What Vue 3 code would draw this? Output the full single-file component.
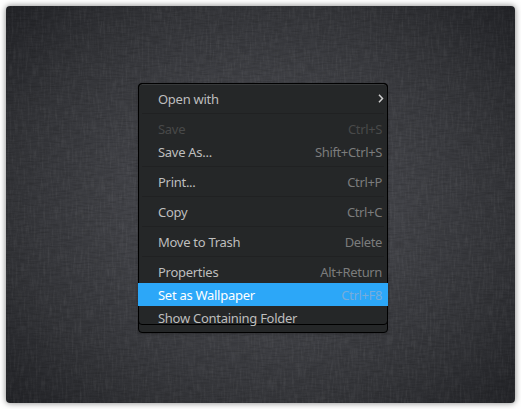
<script setup>
const groups = [
  [{ label: 'Open with', submenu: true }],
  [
    { label: 'Save', keys: 'Ctrl+S', disabled: true },
    { label: 'Save As...', keys: 'Shift+Ctrl+S' },
  ],
  [{ label: 'Print...', keys: 'Ctrl+P' }],
  [{ label: 'Copy', keys: 'Ctrl+C' }],
  [{ label: 'Move to Trash', keys: 'Delete' }],
  [
    { label: 'Properties', keys: 'Alt+Return' },
    { label: 'Set as Wallpaper', keys: 'Ctrl+F8', active: true },
    { label: 'Show Containing Folder' },
  ],
]
</script>

<template>
  <main class="page">
    <section class="desktop">
      <svg class="linen" width="509" height="397" aria-hidden="true">
        <filter id="warp" x="0" y="0" width="100%" height="100%">
          <feTurbulence type="fractalNoise" baseFrequency="0.5 0.07" numOctaves="2" seed="4" />
          <feColorMatrix values="0 0 0 0 1  0 0 0 0 1  0 0 0 0 1  0.9 0 0 0 -0.38" />
        </filter>
        <filter id="weft" x="0" y="0" width="100%" height="100%">
          <feTurbulence type="fractalNoise" baseFrequency="0.09 0.6" numOctaves="2" seed="9" />
          <feColorMatrix values="0 0 0 0 0  0 0 0 0 0  0 0 0 0 0  1.5 0 0 0 -0.6" />
        </filter>
        <rect width="509" height="397" filter="url(#warp)" opacity="0.14" />
        <rect width="509" height="397" filter="url(#weft)" opacity="0.2" />
      </svg>
      <nav class="menu">
        <template v-for="(group, g) in groups" :key="g">
          <div v-if="g" class="separator"></div>
          <div
            v-for="item in group"
            :key="item.label"
            class="item"
            :class="{ disabled: item.disabled, active: item.active }"
          >
            <span class="label">{{ item.label }}</span>
            <span v-if="item.keys" class="keys">{{ item.keys }}</span>
            <svg v-if="item.submenu" class="arrow" width="6" height="9" viewBox="0 0 6 9">
              <path d="M1 .8 4.5 4.5 1 8.2" fill="none" stroke="#d0d0d0" stroke-width="1.5" />
            </svg>
          </div>
        </template>
      </nav>
    </section>
  </main>
</template>

<style>
body {
  background: #fff;
}
</style>

<style scoped>
.page {
  box-sizing: border-box;
  width: 521px;
  height: 409px;
  padding: 6px;
  overflow: hidden;
  background: #fff;
}
.desktop {
  position: relative;
  box-sizing: border-box;
  width: 509px;
  height: 397px;
  padding: 77px 0 0 132px;
  border-radius: 4px;
  background: radial-gradient(ellipse 350px 290px at 50% 50%, #47474d 0%, #434449 35%, #343539 70%, #222327 100%);
  box-shadow: 0 0 6px rgba(0, 0, 0, 0.5);
}
.linen {
  position: absolute;
  inset: 0;
  border-radius: 4px;
}
.menu {
  position: relative;
  box-sizing: border-box;
  width: 250px;
  height: 250px;
  padding: 3px 0;
  border: 1px solid #000;
  border-radius: 4px;
  background: #252728;
  box-shadow: inset 0 1px #37393a, 0 1px 3px rgba(0, 0, 0, 0.25);
  font: 13px/25px "Noto Sans", "Open Sans", sans-serif;
  color: #bebebe;
}
.menu::before {
  content: "";
  position: absolute;
  top: -1px;
  left: -1px;
  box-sizing: border-box;
  width: 250px;
  height: 242px;
  border: 1px solid #000;
  border-radius: 4px;
}
.item {
  position: relative;
  display: flex;
  justify-content: space-between;
  height: 23px;
  margin: 0 -1px;
  padding: 0 6px 0 20px;
  white-space: nowrap;
  letter-spacing: -0.28px;
}
.separator {
  height: 1px;
  margin: 3px 3px;
  background: #202122;
}
.keys {
  color: #7b7c7c;
  letter-spacing: -0.36px;
}
.arrow {
  margin: 7px -2px 0 0;
}
.disabled,
.disabled .keys {
  color: #484949;
}
.active {
  background: #2ca7f8;
  color: #fff;
}
.active .keys {
  color: #76addb;
}
</style>
